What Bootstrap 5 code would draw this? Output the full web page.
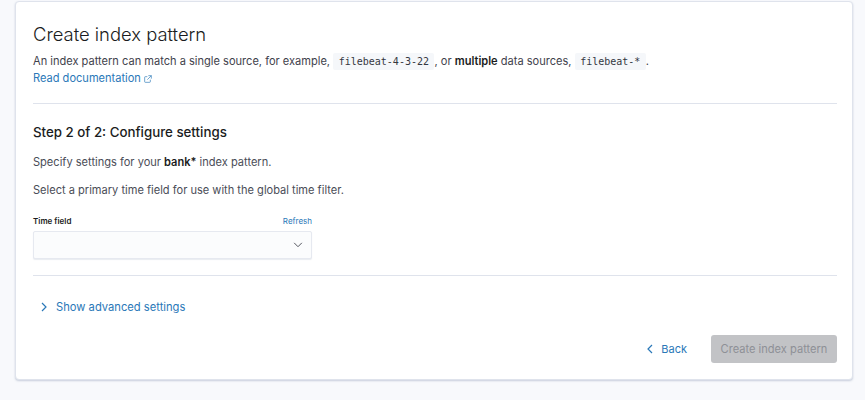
<!DOCTYPE html>
<html lang="en">
<head>
<meta charset="utf-8">
<title>Create index pattern</title>
<link href="https://cdn.jsdelivr.net/npm/bootstrap@5.3.0/dist/css/bootstrap.min.css" rel="stylesheet">
<style>
html,body{height:400px;overflow:hidden}
body{background:#f8f9fc;font-family:Inter,"Liberation Sans",sans-serif;color:#343741;font-size:11.07px;line-height:17px}
.shell{margin:1px 12px 0 15px;height:379px;padding:19px 15px 0 17px;border:1px solid #dfe3ec;border-radius:4px;background:#fff;box-shadow:0 1px 2px rgba(110,125,160,.35)}
.ttl{font-size:18.4px;font-weight:300;line-height:26px;color:#1a1c21;margin:0 0 6px}
.intro{margin:0;height:34px;color:#3f424c}
.intro b,.body-txt b{font-weight:600;color:#1a1c21}
.snip{font-family:"DejaVu Sans Mono","Liberation Mono",monospace;font-size:10px;background:#f5f7fa;color:#343741;padding:3px 5.5px;margin:0;border-radius:2px}
.lnk{color:#2a78b8;text-decoration:none}
.rule{height:1px;background:#dfe3ec;border:0;opacity:1;margin:0}
.step{font-size:13.3px;font-weight:500;line-height:20px;color:#1a1c21;margin:18px 0 0}
.body-txt{margin:0;color:#4a4d57}
.gap-p{margin-top:11px}
.gap-first{margin-top:12px}
.tf-label{font-size:8px;font-weight:600;line-height:12px;color:#1a1c21}
.tf-refresh{font-size:8px;line-height:12px;color:#2a78b8;text-decoration:none}
.tf-wrap{width:279px;margin-top:16px}
.tf-head{margin-bottom:4px}
.tf-box{height:28px;background:#fbfcfd;border:1px solid #e6e9f0;border-radius:2px;box-shadow:0 1px 1px rgba(110,125,160,.15);padding:0 8px 0 0}
.rule-low{margin-top:16px}
.adv{color:#2a78b8;font-size:11.2px;text-decoration:none;margin:21px 0 0 8px;gap:9px;height:20px}
.foot{margin-top:18px;gap:24px}
.back{color:#2a78b8;font-size:11px;text-decoration:none;gap:8px}
.create{width:126px;height:28px;background:#c2c3c6;color:#8e9096;font-size:11.1px;font-weight:400;border:0;border-radius:3px;padding:0;opacity:1}
.create:disabled{background:#c2c3c6;color:#8e9096;opacity:1}
</style>
</head>
<body>
<div class="shell">
  <h1 class="ttl">Create index pattern</h1>
  <p class="intro">An index pattern can match a single source, for example, <code class="snip">filebeat-4-3-22</code>, or <b>multiple</b> data sources, <code class="snip">filebeat-*</code>.<br>
  <a href="#" class="lnk">Read documentation <svg width="8" height="8" viewBox="0 0 12 12" fill="none" stroke="#2a78b8" stroke-width="1"><path d="M5 2.5H2a1 1 0 0 0-1 1V10a1 1 0 0 0 1 1h6.5a1 1 0 0 0 1-1V7"/><path d="M6.5 1H11v4.5M11 1 5 7"/></svg></a></p>
  <hr class="rule mt-3">
  <h2 class="step">Step 2 of 2: Configure settings</h2>
  <p class="body-txt gap-first">Specify settings for your <b>bank*</b> index pattern.</p>
  <p class="body-txt gap-p">Select a primary time field for use with the global time filter.</p>
  <div class="tf-wrap">
    <div class="tf-head d-flex justify-content-between align-items-center">
      <span class="tf-label">Time field</span><a href="#" class="tf-refresh">Refresh</a>
    </div>
    <div class="tf-box d-flex align-items-center justify-content-end">
      <svg width="10" height="6" viewBox="0 0 11 7" fill="none" stroke="#4a4d57" stroke-width="1.1"><path d="M1 1l4.5 4.5L10 1"/></svg>
    </div>
  </div>
  <hr class="rule rule-low">
  <a href="#" class="adv d-inline-flex align-items-center"><svg width="6" height="10" viewBox="0 0 6 10" fill="none" stroke="#2a78b8" stroke-width="1.2"><path d="M1 1l4 4-4 4"/></svg>Show advanced settings</a>
  <div class="foot d-flex justify-content-end align-items-center">
    <a href="#" class="back d-inline-flex align-items-center"><svg width="6" height="10" viewBox="0 0 6 10" fill="none" stroke="#2a78b8" stroke-width="1.2"><path d="M5 1 1 5l4 4"/></svg>Back</a>
    <button class="btn create" disabled>Create index pattern</button>
  </div>
</div>
<script src="https://cdn.jsdelivr.net/npm/bootstrap@5.3.0/dist/js/bootstrap.bundle.min.js"></script>
</body>
</html>
